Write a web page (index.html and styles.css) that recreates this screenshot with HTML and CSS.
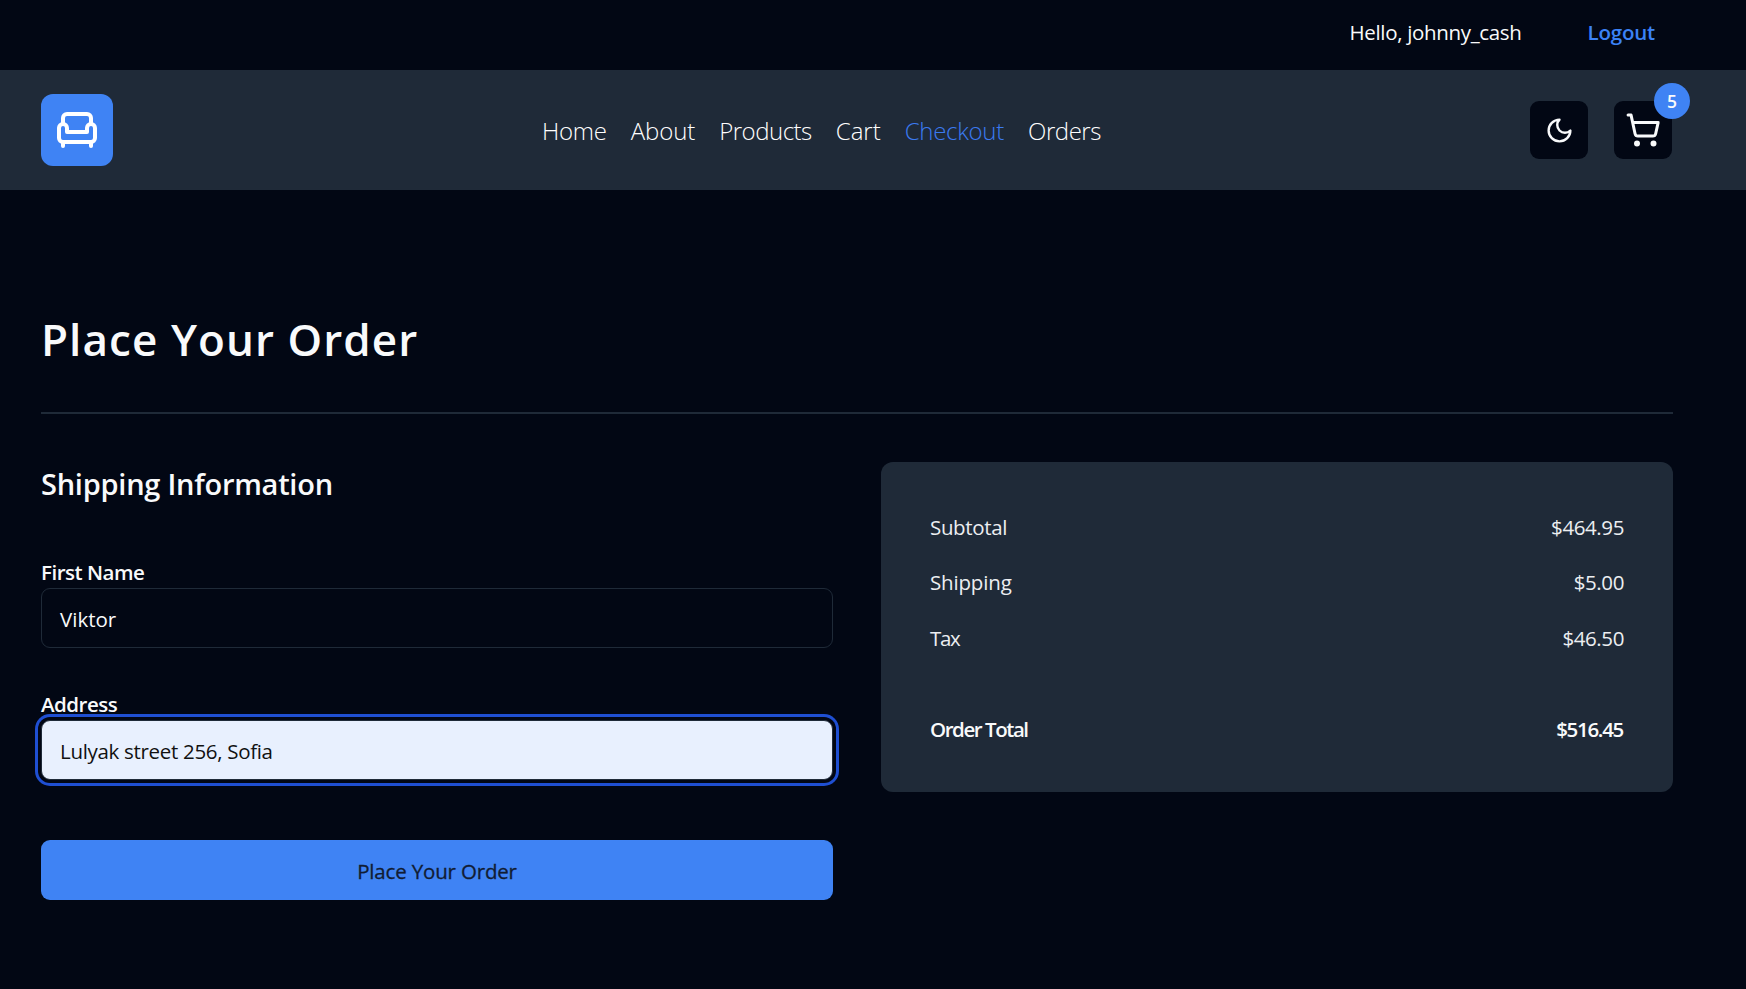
FILE: index.html
```html
<!DOCTYPE html>
<html lang="en">
<head>
<meta charset="utf-8">
<title>Checkout</title>
<link rel="stylesheet" href="styles.css">
</head>
<body>
<div class="topbar">
  <div class="container topbar-inner">
    <span class="hello">Hello, johnny_cash</span>
    <a class="logout">Logout</a>
  </div>
</div>
<header class="header">
  <div class="container header-inner">
    <a class="logo"><svg class="icon logo-icon" viewBox="0 0 24 24"><path d="M19 9V6a2 2 0 0 0-2-2H7a2 2 0 0 0-2 2v3"/><path d="M3 16a2 2 0 0 0 2 2h14a2 2 0 0 0 2-2v-5a2 2 0 0 0-4 0v2H7v-2a2 2 0 0 0-4 0Z"/><path d="M5 18v2"/><path d="M19 18v2"/></svg></a>
    <nav class="nav">
      <a class="n-home">Home</a><a class="n-about">About</a><a class="n-products">Products</a><a class="n-cart">Cart</a><a class="n-checkout">Checkout</a><a class="n-orders">Orders</a>
    </nav>
    <div class="actions">
      <button class="icon-btn"><svg class="icon moon" viewBox="0 0 24 24"><path d="M12 3a6 6 0 0 0 9 9 9 9 0 1 1-9-9Z"/></svg></button>
      <a class="icon-btn"><svg class="icon cart" viewBox="0 0 24 24"><circle cx="8" cy="21" r="1"/><circle cx="19" cy="21" r="1"/><path d="M2.05 2.05h2l2.66 12.42a2 2 0 0 0 2 1.58h9.78a2 2 0 0 0 1.95-1.57l1.65-7.43H5.12"/></svg><span class="badge">5</span></a>
    </div>
  </div>
</header>
<main class="container main">
  <h1 class="title"><span>Place Your Order</span></h1>
  <div class="columns">
    <form class="form">
      <h2 class="section"><span>Shipping Information</span></h2>
      <label class="label"><span class="l-first">First Name</span></label>
      <div class="input"><span class="v-first">Viktor</span></div>
      <label class="label label-second"><span class="l-address">Address</span></label>
      <div class="input focused"><span class="v-address">Lulyak street 256, Sofia</span></div>
      <button type="button" class="submit"><span>Place Your Order</span></button>
    </form>
    <section class="card">
      <p class="row row-first"><span class="s-subtotal">Subtotal</span><span class="s-amount">$464.95</span></p>
      <p class="row"><span class="s-shipping">Shipping</span><span class="s-amount">$5.00</span></p>
      <p class="row"><span class="s-tax">Tax</span><span class="s-amount">$46.50</span></p>
      <p class="row total"><span class="s-total">Order Total</span><span class="s-sum">$516.45</span></p>
    </section>
  </div>
</main>
</body>
</html>
```
FILE: styles.css
```css
* { box-sizing: border-box; margin: 0; padding: 0; }
body {
  background: #020714;
  color: #f9fafb;
  font-family: "Segoe UI", "Open Sans", "Noto Sans", sans-serif;
  font-size: 20.5px;
  line-height: 30px;
  overflow: hidden;
}
span, a { white-space: nowrap; }
.container { width: 1632px; margin-left: 41px; }
.topbar { height: 70px; }
.topbar-inner { display: flex; justify-content: flex-end; gap: 66px; padding: 17px 18px 0 0; }
.hello { letter-spacing: -.33px; }
.logout { color: #3b82f6; font-weight: 600; letter-spacing: -.2px; }
.header { background: #1f2a38; height: 120px; }
.header-inner { display: flex; justify-content: space-between; align-items: center; height: 120px; padding-right: 1px; }
.logo { width: 72px; height: 72px; border-radius: 12px; background: #3f83f4; display: flex; align-items: center; justify-content: center; }
.icon { fill: none; stroke: currentColor; stroke-width: 2; stroke-linecap: round; stroke-linejoin: round; }
.logo-icon { width: 48px; height: 48px; color: #fff; }
.nav { display: flex; gap: 24px; font-size: 24px; font-weight: 300; padding-top: 2px; color: #fff; }
.n-home { letter-spacing: -.25px; }
.n-about { letter-spacing: -.1px; }
.n-products { letter-spacing: -.5px; }
.n-checkout { color: #3b7af0; letter-spacing: -.28px; }
.n-orders { letter-spacing: -.45px; }
.actions { display: flex; gap: 26px; }
.icon-btn { position: relative; width: 58px; height: 58px; border: 0; border-radius: 9px; background: #020714; color: #f9fafb; display: flex; align-items: center; justify-content: center; }
.moon { width: 29px; height: 29px; }
.cart { width: 36px; height: 36px; }
.badge { position: absolute; top: -18px; right: -18px; width: 36px; height: 36px; border-radius: 50%; background: #3f83f4; font-size: 17.5px; font-weight: 600; line-height: 37px; text-align: center; }
.main { padding-top: 119px; }
.title { height: 105px; border-bottom: 2px solid #1f2a38; font-size: 44px; font-weight: 600; line-height: 60px; letter-spacing: 1.07px; }
.columns { display: grid; grid-template-columns: 1fr 1fr; gap: 48px; padding-top: 48px; align-items: start; }
.form { display: flex; flex-direction: column; }
.section { font-size: 29px; font-weight: 600; line-height: 43px; letter-spacing: -.25px; }
.label { margin-top: 52px; height: 31px; line-height: 30px; font-weight: 600; letter-spacing: -.49px; }
.label-second { margin-top: 41px; }
.input { height: 60px; border: 1px solid #1f2a38; border-radius: 9px; padding: 0 18px; line-height: 60px; }
.focused { background: #e8f0fe; color: #111; box-shadow: 0 0 0 3px #020714, 0 0 0 6px #1f4fd2; }
.v-address { letter-spacing: -.31px; }
.submit { margin-top: 60px; height: 60px; border: 0; border-radius: 9px; background: #3f83f4; color: #111c33; font: inherit; letter-spacing: -.17px; line-height: 62px; -webkit-text-stroke: .3px #111c33; }
.card { height: 330px; border-radius: 12px; background: #1f2a38; padding: 48px 49px 0 49px; }
.row { display: flex; justify-content: space-between; height: 56px; line-height: 35px; color: #eceef1; }
.row-first { height: 55px; }
.s-subtotal { letter-spacing: -.35px; }
.s-shipping { letter-spacing: -.17px; }
.s-tax { letter-spacing: -1.3px; }
.s-amount { letter-spacing: -.4px; }
.total { margin-top: 35px; font-weight: 600; color: #f9fafb; }
.s-total { letter-spacing: -1.45px; }
.s-sum { letter-spacing: -1.3px; margin-right: 1px; }
```
